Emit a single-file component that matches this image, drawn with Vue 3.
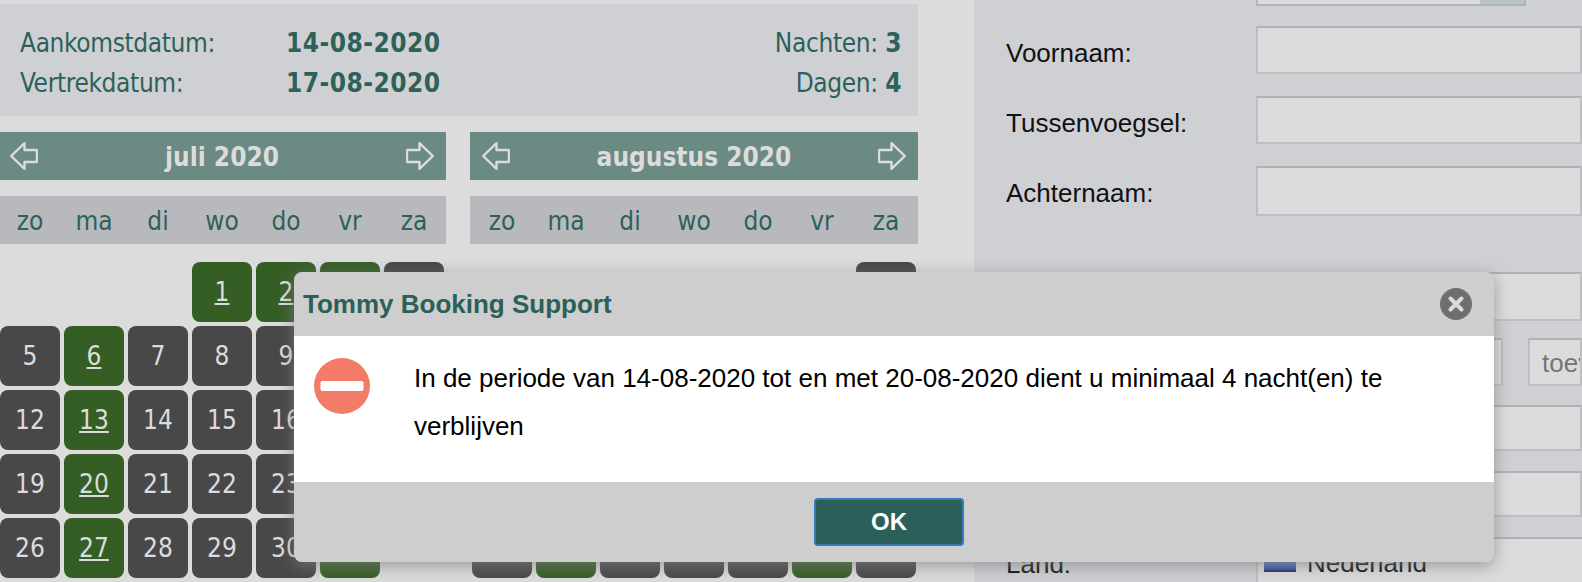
<script setup>
const weekdays = ['zo', 'ma', 'di', 'wo', 'do', 'vr', 'za']

const julyCells = [
  null, null, null,
  { n: 1, open: true }, { n: 2, open: true }, { n: 3, open: true }, { n: 4 },
  { n: 5 }, { n: 6, open: true }, { n: 7 }, { n: 8 }, { n: 9 }, { n: 10 }, { n: 11 },
  { n: 12 }, { n: 13, open: true }, { n: 14 }, { n: 15 }, { n: 16 }, { n: 17 }, { n: 18 },
  { n: 19 }, { n: 20, open: true }, { n: 21 }, { n: 22 }, { n: 23 }, { n: 24 }, { n: 25 },
  { n: 26 }, { n: 27, open: true }, { n: 28 }, { n: 29 }, { n: 30 }, { n: 31, open: true }, null
]

const augustCells = [
  null, null, null, null, null, null, { n: 1 },
  { n: 2 }, { n: 3, open: true }, { n: 4 }, { n: 5 }, { n: 6 }, { n: 7, open: true }, { n: 8 },
  { n: 9 }, { n: 10, open: true }, { n: 11 }, { n: 12 }, { n: 13 }, { n: 14, open: true }, { n: 15 },
  { n: 16 }, { n: 17, open: true }, { n: 18 }, { n: 19 }, { n: 20 }, { n: 21, open: true }, { n: 22 },
  { n: 23 }, { n: 24, open: true }, { n: 25 }, { n: 26 }, { n: 27 }, { n: 28, open: true }, { n: 29 }
]

const months = [
  { title: 'juli 2020', cells: julyCells },
  { title: 'augustus 2020', cells: augustCells }
]
</script>

<template>
  <div class="page">
    <main class="left">
      <section class="summary">
        <div class="summary-dates">
          <div class="line"><span class="lbl">Aankomstdatum:</span><b>14-08-2020</b></div>
          <div class="line"><span class="lbl">Vertrekdatum:</span><b>17-08-2020</b></div>
        </div>
        <div class="summary-count">
          <div><span class="lbl-r">Nachten:</span> <b>3</b></div>
          <div><span class="lbl-r">Dagen:</span> <b>4</b></div>
        </div>
      </section>

      <section class="months">
        <div v-for="m in months" :key="m.title" class="month">
          <div class="month-head">
            <svg class="arrow" viewBox="0 0 28 28" fill="none" stroke="#dcdcdc" stroke-width="2.4" stroke-linejoin="round">
              <path d="M14.5 1.2 1.2 14 14.5 26.8V20H26q1 0 1-1V9q0-1-1-1H14.5z" />
            </svg>
            <span class="month-title">{{ m.title }}</span>
            <svg class="arrow" viewBox="0 0 28 28" fill="none" stroke="#dcdcdc" stroke-width="2.4" stroke-linejoin="round">
              <path d="M13.5 1.2 26.8 14 13.5 26.8V20H2q-1 0-1-1V9q0-1 1-1h11.500z" />
            </svg>
          </div>
          <div class="week">
            <span v-for="d in weekdays" :key="d">{{ d }}</span>
          </div>
          <div class="days">
            <template v-for="(c, i) in m.cells" :key="i">
              <span v-if="!c" class="blank"></span>
              <a v-else class="day" :class="{ open: c.open }">{{ c.n }}</a>
            </template>
          </div>
        </div>
      </section>
    </main>

    <aside class="form">
      <div class="row r-select"><div class="select"><i></i></div></div>
      <div class="row r1"><label>Voornaam:</label><div class="input"></div></div>
      <div class="row r2"><label>Tussenvoegsel:</label><div class="input"></div></div>
      <div class="row r3"><label>Achternaam:</label><div class="input"></div></div>
      <div class="row r4"><label></label><div class="input"></div></div>
      <div class="row r5"><label></label><div class="split"><div class="input"></div><div class="input ph">toevoeging</div></div></div>
      <div class="row r6"><label></label><div class="input"></div></div>
      <div class="row r7"><label></label><div class="input"></div></div>
      <div class="row r8">
        <label>Land:</label>
        <div class="input land"><span class="flag"></span><span class="land-name">Nederland</span></div>
      </div>
    </aside>

    <div class="dialog">
      <header class="dlg-head">
        <span>Tommy Booking Support</span>
        <svg class="close" viewBox="0 0 32 32">
          <circle cx="16" cy="16" r="16" fill="#6f6f6f" />
          <path d="M10.500 10.500 21.500 21.500M21.500 10.500 10.500 21.500" stroke="#dadada" stroke-width="4" stroke-linecap="round" />
        </svg>
      </header>
      <div class="dlg-body">
        <svg class="stop" viewBox="0 0 56 56">
          <circle cx="28" cy="28" r="28" fill="#f27c68" />
          <rect x="6.5" y="23" width="43" height="10" rx="2" fill="#fff" />
        </svg>
        <p>In de periode van 14-08-2020 tot en met 20-08-2020 dient u minimaal 4 nacht(en) te verblijven</p>
      </div>
      <footer class="dlg-foot">
        <button type="button">OK</button>
      </footer>
    </div>
  </div>
</template>

<style>
html, body { margin: 0; overflow: hidden; background: #dcdcdc; }
</style>

<style scoped>
.page {
  position: relative;
  width: 1582px;
  height: 582px;
  overflow: hidden;
  display: flex;
  background: #dcdcdc;
}
.left {
  width: 918px;
  padding-top: 4px;
  margin-right: 56px;
  flex: none;
  font-family: "DejaVu Sans Condensed", "DejaVu Sans", sans-serif;
  font-stretch: condensed;
  color: #2d6159;
}
.summary {
  height: 112px;
  box-sizing: border-box;
  padding: 19px 16px 0 20px;
  background: #cfd0d4;
  display: flex;
  justify-content: space-between;
  font-size: 26px;
  line-height: 40px;
}
.summary b { letter-spacing: 0.5px; }
.line { display: flex; }
.lbl { width: 266px; letter-spacing: -0.36px; }
.lbl-r { letter-spacing: -0.36px; }
.summary-count { text-align: right; }
.months {
  display: flex;
  gap: 24px;
  margin-top: 16px;
}
.month { width: 448px; }
.month:first-child { width: 446px; }
.month-head {
  height: 48px;
  background: #6b8a83;
  display: flex;
  align-items: center;
  justify-content: space-between;
  padding: 0 12px;
  color: #dcdcdc;
}
.month:first-child .month-head { padding-left: 10px; }
.month-title { font-size: 26px; font-weight: 700; padding-top: 2px; }
.arrow { width: 28px; height: 28px; flex: none; }
.week {
  height: 48px;
  margin-top: 16px;
  background: #b8b9bd;
  display: grid;
  grid-template-columns: repeat(7, 60px);
  column-gap: 4px;
  align-items: center;
  justify-items: center;
  font-size: 26px;
}
.week span { padding-top: 2px; }
.days {
  margin-top: 18px;
  display: grid;
  grid-template-columns: repeat(7, 60px);
  grid-auto-rows: 60px;
  gap: 4px;
}
.month:last-child .week,
.month:last-child .days { padding-left: 2px; }
.day {
  border-radius: 8px;
  background: #484848;
  color: #dcdcdc;
  display: flex;
  align-items: center;
  justify-content: center;
  font-size: 26px;
}
.day.open { background: #355e25; text-decoration: underline; }

.form {
  flex: 1;
  min-width: 0;
  background: #cfd0d4;
  font-family: "Liberation Sans", Arial, sans-serif;
  font-size: 26px;
  color: #111;
}
.row { display: flex; align-items: flex-start; box-sizing: border-box; }
.row label {
  width: 282px;
  padding: 3px 0 0 32px;
  line-height: 48px;
  box-sizing: border-box;
  flex: none;
}
.row > .input, .split { flex: 1; min-width: 0; }
.input {
  box-sizing: border-box;
  height: 100%;
  background: #dcdcdc;
  border: 2px solid #bdbec1;
  border-top-color: #b0b1b4;
}
.r-select { height: 6px; padding-left: 282px; align-items: flex-end; }
.select {
  position: relative;
  flex: none;
  width: 270px;
  height: 20px;
  box-sizing: border-box;
  background: #dcdcdc;
  border: 2px solid #b2b3b6;
}
.select i { position: absolute; top: 0; bottom: 0; right: 0; width: 44px; background: #b9c5c2; }
.r1 { height: 48px; margin-top: 20px; }
.r2 { height: 48px; margin-top: 22px; }
.r3 { height: 50px; margin-top: 22px; }
.r4 { height: 49px; margin-top: 56px; }
.r5 { height: 48px; margin-top: 17px; }
.r6 { height: 46px; margin-top: 19px; }
.r7 { height: 46px; margin-top: 20px; }
.r8 { height: 50px; margin-top: 20px; }
.split { display: flex; gap: 25px; height: 100%; }
.split .input:first-child { width: 247px; flex: none; }
.split .input:last-child { flex: 1; }
.ph {
  color: #757575;
  padding-left: 12px;
  line-height: 47px;
  white-space: nowrap;
  overflow: hidden;
}
.land {
  display: flex;
  align-items: flex-start;
  gap: 11px;
  padding: 0 0 0 6px;
  border-bottom: 0;
  border-right: 0;
}
.flag {
  width: 32px;
  height: 22px;
  margin-top: 11px;
  box-sizing: border-box;
  border-bottom: 2px solid #1d3480;
  background: linear-gradient(#e4e4e4 0 50%, #6a86c4 50%, #2d4a99);
}
.land-name { line-height: 48px; }

.dialog {
  position: absolute;
  left: 294px;
  top: 272px;
  width: 1200px;
  height: 290px;
  border-radius: 8px;
  overflow: hidden;
  display: flex;
  flex-direction: column;
  background: #cecece;
  box-shadow: 0 4px 16px rgba(125, 125, 125, 0.7);
  font-family: "Liberation Sans", Arial, sans-serif;
}
.dlg-head {
  height: 64px;
  flex: none;
  display: flex;
  align-items: center;
  justify-content: space-between;
  padding: 0 22px 0 9px;
  color: #2a6059;
  font-size: 26px;
  font-weight: 700;
}
.dlg-head span { padding-top: 1px; }
.close { width: 32px; height: 32px; }
.dlg-body {
  height: 146px;
  flex: none;
  background: #fff;
  display: flex;
  align-items: flex-start;
  color: #000;
  font-size: 26px;
  line-height: 48px;
  box-sizing: border-box;
  padding: 18px 60px 0 20px;
}
.stop { width: 56px; height: 56px; flex: none; margin: 4px 44px 0 0; }
.dlg-body p { margin: 0; flex: 1; }
.dlg-foot {
  flex: 1;
  display: flex;
  align-items: flex-start;
  justify-content: center;
  padding: 16px 10px 0 0;
}
.dlg-foot button {
  width: 150px;
  height: 48px;
  padding: 0;
  box-sizing: border-box;
  background: #2a6059;
  border: 2px solid #3478bd;
  border-radius: 4px;
  color: #fff;
  font: 700 24px "Liberation Sans", Arial, sans-serif;
}
</style>
